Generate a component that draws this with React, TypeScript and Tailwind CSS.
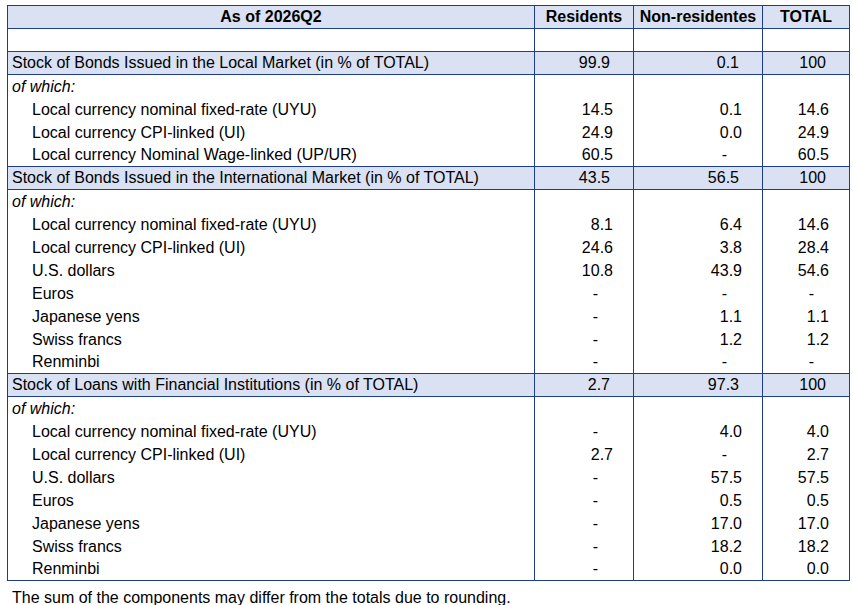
import React from 'react';

type Row =
  | { kind: 'section'; label: string; values: string[] }
  | { kind: 'which' }
  | { kind: 'item'; label: string; values: string[] };

const rows: Row[] = [
  { kind: 'section', label: 'Stock of Bonds Issued in the Local Market (in % of TOTAL)', values: ['99.9', '0.1', '100'] },
  { kind: 'which' },
  { kind: 'item', label: 'Local currency nominal fixed-rate (UYU)', values: ['14.5', '0.1', '14.6'] },
  { kind: 'item', label: 'Local currency CPI-linked (UI)', values: ['24.9', '0.0', '24.9'] },
  { kind: 'item', label: 'Local currency Nominal Wage-linked (UP/UR)', values: ['60.5', '-', '60.5'] },
  { kind: 'section', label: 'Stock of Bonds Issued in the International Market (in % of TOTAL)', values: ['43.5', '56.5', '100'] },
  { kind: 'which' },
  { kind: 'item', label: 'Local currency nominal fixed-rate (UYU)', values: ['8.1', '6.4', '14.6'] },
  { kind: 'item', label: 'Local currency CPI-linked (UI)', values: ['24.6', '3.8', '28.4'] },
  { kind: 'item', label: 'U.S. dollars', values: ['10.8', '43.9', '54.6'] },
  { kind: 'item', label: 'Euros', values: ['-', '-', '-'] },
  { kind: 'item', label: 'Japanese yens', values: ['-', '1.1', '1.1'] },
  { kind: 'item', label: 'Swiss francs', values: ['-', '1.2', '1.2'] },
  { kind: 'item', label: 'Renminbi', values: ['-', '-', '-'] },
  { kind: 'section', label: 'Stock of Loans with Financial Institutions (in % of TOTAL)', values: ['2.7', '97.3', '100'] },
  { kind: 'which' },
  { kind: 'item', label: 'Local currency nominal fixed-rate (UYU)', values: ['-', '4.0', '4.0'] },
  { kind: 'item', label: 'Local currency CPI-linked (UI)', values: ['2.7', '-', '2.7'] },
  { kind: 'item', label: 'U.S. dollars', values: ['-', '57.5', '57.5'] },
  { kind: 'item', label: 'Euros', values: ['-', '0.5', '0.5'] },
  { kind: 'item', label: 'Japanese yens', values: ['-', '17.0', '17.0'] },
  { kind: 'item', label: 'Swiss francs', values: ['-', '18.2', '18.2'] },
  { kind: 'item', label: 'Renminbi', values: ['-', '0.0', '0.0'] },
];

const cell = 'h-[23px] p-0 pb-[2px] align-bottom leading-[18px] border-x border-[#1f3d8f]';

function ValueCell({ v, section }: { v: string; section?: boolean }) {
  const pad = v === '-' ? 'pr-[35px]' : section ? 'pr-[23px]' : 'pr-[20px]';
  return <td className={`${cell} text-right ${pad}`}>{v}</td>;
}

export default function App() {
  return (
    <div className="bg-white w-[853px] h-[605px] pt-[5px] pl-[7px] text-black text-[16px] font-['Liberation_Sans',Arial,sans-serif]">
      <table className="table-fixed border-collapse w-[842px] border border-[#1f3d8f]">
        <colgroup>
          <col className="w-[527px]" />
          <col className="w-[99px]" />
          <col className="w-[129px]" />
          <col className="w-[87px]" />
        </colgroup>
        <thead>
          <tr className="bg-[#d9e1f2] font-bold border-b border-[#1f3d8f]">
            <th className={`${cell} text-center`}>As of 2026Q2</th>
            <th className={`${cell} text-center`}>Residents</th>
            <th className={`${cell} text-center`}>Non-residentes</th>
            <th className={`${cell} text-center`}>TOTAL</th>
          </tr>
        </thead>
        <tbody>
          <tr className="border-b border-[#1f3d8f]">
            <td className={cell}></td>
            <td className={cell}></td>
            <td className={cell}></td>
            <td className={cell}></td>
          </tr>
          {rows.map((r, i) => {
            if (r.kind === 'section') {
              return (
                <tr key={i} className="bg-[#d9e1f2] border-y border-[#1f3d8f]">
                  <td className={`${cell} pl-[4px] whitespace-nowrap`}>{r.label}</td>
                  {r.values.map((v, j) => (
                    <ValueCell key={j} v={v} section />
                  ))}
                </tr>
              );
            }
            if (r.kind === 'which') {
              return (
                <tr key={i}>
                  <td className={`${cell} pl-[4px] italic`}>of which:</td>
                  <td className={cell}></td>
                  <td className={cell}></td>
                  <td className={cell}></td>
                </tr>
              );
            }
            return (
              <tr key={i}>
                <td className={`${cell} pl-[24px]`}>{r.label}</td>
                {r.values.map((v, j) => (
                  <ValueCell key={j} v={v} />
                ))}
              </tr>
            );
          })}
        </tbody>
      </table>
      <p className="mt-[8px] pl-[5px] leading-[18px]">The sum of the components may differ from the totals due to rounding.</p>
    </div>
  );
}
